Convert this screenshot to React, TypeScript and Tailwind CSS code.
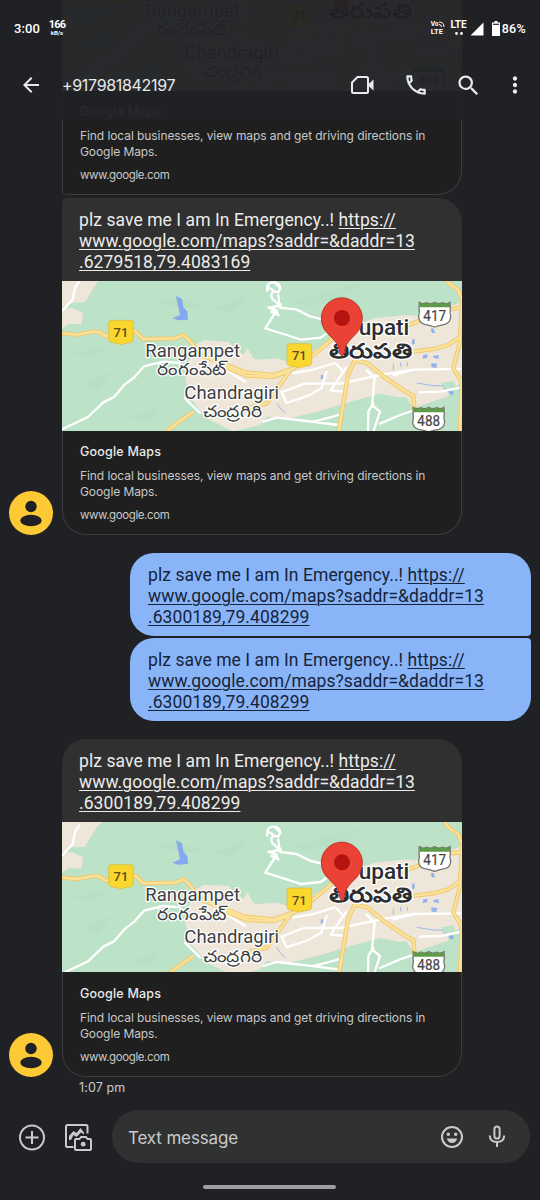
import React from "react";
import { MdArrowBack, MdSearch, MdMoreVert, MdOutlineCall } from "react-icons/md";

const LABEL = "Roboto, 'Noto Sans', sans-serif";

function YellowShield({ x, y }: { x: number; y: number }) {
  return (
    <g transform={`translate(${x} ${y})`}>
      <path
        d="M-30 -36H30Q37 -36 37 -29V21Q37 28 30 30L8 34Q0 40 -8 34L-30 30Q-37 28 -37 21V-29Q-37 -36 -30 -36Z"
        fill="#f9d72f"
        stroke="#d8b83c"
        strokeWidth="2"
      />
      <text x="0" y="14" fontSize="39" fontWeight="500" textAnchor="middle" fill="#5a4e1c" fontFamily={LABEL}>
        71
      </text>
    </g>
  );
}

function WhiteShield({ x, y, label }: { x: number; y: number; label: string }) {
  return (
    <g transform={`translate(${x} ${y})`}>
      <path
        d="M-46 -38Q-34 -30 -24 -37Q-12 -30 0 -38Q12 -30 24 -37Q34 -30 46 -38L47 -18Q44 -8 48 4Q48 24 30 28Q12 31 0 36Q-12 31 -30 28Q-48 24 -48 4Q-44 -8 -47 -18Z"
        fill="#fff"
        stroke="#77776f"
        strokeWidth="4"
      />
      <path d="M-46 -38Q-34 -30 -24 -37Q-12 -30 0 -38Q12 -30 24 -37Q34 -30 46 -38L46 -23H-46Z" fill="#5f9a4a" />
      <text
        x="0"
        y="17"
        fontSize="42"
        textAnchor="middle"
        fill="#444"
        stroke="#444"
        strokeWidth=".5"
        fontFamily={LABEL}
        textLength="68"
        lengthAdjust="spacingAndGlyphs"
      >
        {label}
      </text>
    </g>
  );
}

const yellowRoads = [
  "M0 174L50 179L100 170L120 172L138 184L180 184L225 168L250 192L345 190L372 180L396 205L420 240L495 268L555 292L640 300L700 280L760 240L812 196L870 140",
  "M495 276L560 302L640 306L690 288L620 385L560 400",
  "M400 410L360 438L318 470",
  "M1150 0L1165 24L1195 45L1206 75L1200 200L1180 280L1205 320L1200 470",
  "M1206 98L1160 104L1060 145L1010 162",
  "M1040 232L1120 222L1165 210L1200 186",
  "M836 470L850 385L864 300L884 256L922 264L975 308L1040 352L1060 362L1064 408",
];

const whiteRoads = [
  "M58 18L45 38L38 74L6 108",
  "M8 462L84 426L130 382L162 366L195 328L224 306L252 274L310 260L360 264",
  "M660 98L710 104L750 124L790 134",
  "M622 48Q618 20 645 22Q668 28 655 52Q628 44 636 70Q650 84 662 92L625 98L650 106L616 160L680 180L722 194L782 188L810 168",
  "M640 98L662 88M634 110L656 120M645 24L662 40M622 36L640 46M636 100L652 112M655 60L658 90",
  "M670 350L732 326L840 326L962 300L1060 284L1200 282",
  "M824 264L760 284L700 294",
  "M858 278L812 346L852 350M830 268L850 290M800 290L784 340L745 362L680 384L664 350",
  "M920 286L944 310L936 390L960 410L940 470M940 385L925 410L924 470",
  "M1200 338L1142 350L1080 352M1080 400L1020 420L960 446",
  "M610 440L650 428L740 438L835 450M835 420L785 434L760 440",
  "M375 370L420 414M500 286L556 320M1000 300L1060 284",
];

function MapPreview({ shifted = false }: { shifted?: boolean }) {
  return (
    <svg className="block h-[150px] w-full" viewBox={shifted ? "6 8 1200 450" : "6 18 1200 450"} aria-label="Map">
      <rect x="0" y="0" width="1210" height="480" fill="#bce2c8" />
      <g fill="#aed9bd" opacity=".3">
        <path d="M280 80Q330 60 420 92L380 100Z" />
        <path d="M460 100L560 66L520 110Z" />
        <path d="M700 80L900 25L850 70L740 94Z" />
        <path d="M70 330L150 290L120 340Z" />
        <path d="M210 430L300 395L270 440Z" />
        <path d="M40 235L140 215L90 250Z" />
      </g>
      <g fill="#ede6d9">
        <path d="M0 0H135L110 24L75 82L35 84L6 98Z" />
        <path d="M6 100L35 98L70 114L64 148L28 146L6 160Z" />
        <path d="M400 214L430 196L505 200L550 240L562 218L580 250L590 254L650 250L690 262L740 240L810 196L850 170L940 130L1040 120L1100 126L1180 90L1206 80V320L1170 350L1160 380L1120 392L1060 396L1040 372L960 356L880 378L780 408L690 430L620 426L600 450L520 470L440 430L390 370L376 312Z" />
      </g>
      <g fill="#bce2c8">
        <path d="M1145 324L1180 318L1190 340L1150 342Z" />
        <path d="M862 400L920 376L1040 366L1058 400L1206 350V470H850Z" />
      </g>
      <g fill="#84a9ef">
        <path d="M348 62L366 72L370 96L382 110L384 134L354 136L338 130L360 120Z" />
        <path
          d="M1090 240L1102 238V248L1088 252ZM1120 242L1136 240V252L1120 248ZM1114 264L1132 266L1128 280L1114 276ZM1112 162L1120 160L1126 174H1116ZM1056 194L1064 192V208H1056ZM1164 348L1180 350V360L1168 358ZM783 300H789V312H782Z"
          opacity=".85"
        />
      </g>
      <g fill="none" stroke="#84a9ef" strokeWidth="3" opacity=".75">
        <path d="M1070 324L1120 332H1150M1000 268V286M1022 262V276M1042 262V274M650 384L662 402L676 414M1150 340L1180 350" />
      </g>
      <g fill="none" stroke="#fff" strokeWidth="7" strokeLinejoin="round" strokeLinecap="round">
        {whiteRoads.map((d) => (
          <path key={d} d={d} />
        ))}
      </g>
      <g fill="none" strokeLinejoin="round">
        {yellowRoads.map((d) => (
          <path key={d} d={d} stroke="#f0c96f" strokeWidth="13" />
        ))}
        {yellowRoads.map((d) => (
          <path key={d} d={d} stroke="#fbe29a" strokeWidth="7" />
        ))}
      </g>
      <YellowShield x={183} y={172} />
      <YellowShield x={718} y={242} />
      <g fontFamily={LABEL} fill="#3d3f42" stroke="#fff" strokeWidth="8" strokeLinejoin="round" paintOrder="stroke">
        <text x="256" y="245" fontSize="56" textLength="284" lengthAdjust="spacingAndGlyphs">
          Rangampet
        </text>
        <text x="292" y="301" fontSize="51" textLength="208" lengthAdjust="spacingAndGlyphs">
          రంగంపేట్
        </text>
        <text x="373" y="372" fontSize="56" textLength="284" lengthAdjust="spacingAndGlyphs">
          Chandragiri
        </text>
        <text x="428" y="427" fontSize="49" textLength="180" lengthAdjust="spacingAndGlyphs">
          చంద్రగిరి
        </text>
        <text x="896" y="179" fontSize="66" fontWeight="500" fill="#2c2d30" textLength="152" lengthAdjust="spacingAndGlyphs">
          upati
        </text>
        <text x="808" y="248" fontSize="62" fontWeight="700" fill="#2c2d30" textLength="248" lengthAdjust="spacingAndGlyphs">
          తిరుపతి
        </text>
      </g>
      <WhiteShield x={1124} y={120} label="417" />
      <WhiteShield x={1106} y={435} label="488" />
      <path
        d="M846 242C839 242 839 230 836 219C828 186 784 177 784 130A61.500 61.500 0 0 1 907 130C907 177 864 186 856 219C853 230 853 242 846 242Z"
        fill="#ea4335"
        stroke="#bd3429"
        strokeWidth="3"
      />
      <circle cx="846" cy="129" r="24" fill="#b31412" />
    </svg>
  );
}

function MessageText({ tail }: { tail: string }) {
  return (
    <p className="whitespace-nowrap text-[17.500px] leading-[21px] tracking-[0.07px]">
      plz save me I am In Emergency..!{" "}
      <a className="underline decoration-1 underline-offset-2">
        https://
        <br />
        www.google.com/maps?saddr=&amp;daddr=13
        <br />
        {tail}
      </a>
    </p>
  );
}

function Avatar() {
  return (
    <svg className="ml-[9px] mr-[9px] size-11 shrink-0 self-end" viewBox="0 0 44 44">
      <circle cx="22" cy="22" r="22" fill="#fdc935" />
      <circle cx="22" cy="15.500" r="5.700" fill="#202124" />
      <ellipse cx="22" cy="29.500" rx="10.700" ry="5.700" fill="#202124" />
    </svg>
  );
}

function LinkCard({
  tail,
  shifted,
  bottom = "rounded-b-[24px]",
  top = "rounded-t-[24px]",
  details = "h-[104px] pt-[13px]",
}: {
  tail: string;
  shifted?: boolean;
  bottom?: string;
  top?: string;
  details?: string;
}) {
  return (
    <div className={`w-[400px] overflow-hidden bg-[#303030] ${top} ${bottom}`}>
      <div className="h-[83px] pl-[17px] pt-3 text-[#ececec]">
        <MessageText tail={tail} />
      </div>
      <MapPreview shifted={shifted} />
      <div
        className={`border border-t-0 border-[#3d3d3f] bg-[#1f1f1f] pl-[17px] font-[Inter,sans-serif] ${details} ${bottom}`}
      >
        <h2 className="text-[12.500px] font-medium leading-4 tracking-[0.2px] text-[#e8e8e8]">Google Maps</h2>
        <p className="mt-2 whitespace-nowrap text-[12px] leading-[15.500px] tracking-[-0.08px] text-[#c8c8c8]">
          Find local businesses, view maps and get driving directions in
          <br />
          Google Maps.
        </p>
        <p className="mt-2 text-[11.500px] leading-4 tracking-[-0.4px] text-[#c8c8c8]">www.google.com</p>
      </div>
    </div>
  );
}

function SentBubble({ corner }: { corner: string }) {
  return (
    <div className={`h-[83px] w-[401px] bg-[#8ab4f8] pl-[18px] pt-3 text-[#15243a] ${corner}`}>
      <MessageText tail=".6300189,79.408299" />
    </div>
  );
}

function StatusBar() {
  return (
    <div className="flex h-14 items-center pl-[14px] text-white">
      <span className="pt-px text-[13px] font-medium leading-4 tracking-[0.1px]">3:00</span>
      <span className="ml-[9px] flex w-4 flex-col items-center">
        <span className="text-[11px] font-bold leading-[10px] tracking-[-0.8px]">166</span>
        <span className="text-[6px] font-bold leading-[6px]">kB/s</span>
      </span>
      <span className="ml-auto flex flex-col text-[7.500px] font-bold leading-[8px]">
        <span className="flex items-center text-[6.500px]">
          Vo
          <svg className="size-[6px]" viewBox="0 0 6 6" fill="none" stroke="white" strokeWidth="1">
            <path d="M0 1Q5 1 5 6M0 3.500Q2.500 3.500 2.500 6" />
          </svg>
        </span>
        <span>LTE</span>
      </span>
      <span className="ml-[6px] flex flex-col items-center text-[10px] font-bold leading-[8px]">
        LTE
        <svg className="mt-[3px] h-[3px] w-2" viewBox="0 0 8 3" fill="white">
          <circle cx="1.500" cy="1.500" r="1.400" />
          <circle cx="6.500" cy="1.500" r="1.400" />
        </svg>
      </span>
      <svg className="ml-[3px] mt-px size-[14px]" viewBox="0 0 14 14" fill="white">
        <path d="M13.500 0.500V13.500H0.500Z" />
      </svg>
      <svg className="ml-2 h-[15px] w-2" viewBox="0 0 8 15" fill="white">
        <path d="M2.500 0h3v1.500H8V15H0V1.500h2.500Z" />
        <path d="M1 2.700h6v1.300H1Z" fill="#3b3c40" />
      </svg>
      <span className="ml-[2px] mr-[14px] pt-px text-[12.500px] font-medium leading-4 tracking-[0.3px]">86%</span>
    </div>
  );
}

function Header() {
  return (
    <header className="absolute inset-x-0 top-0 h-[120px] bg-[#202124]/96 text-[#e8eaed]">
      <StatusBar />
      <div className="flex h-[58px] items-center">
        <MdArrowBack className="ml-[19px] size-6" />
        <h1 className="ml-[19px] font-[Inter,sans-serif] text-[16px] leading-6 tracking-[-0.32px]">+917981842197</h1>
        <svg
          className="ml-auto h-5 w-6"
          viewBox="0 0 24 20"
          fill="none"
          stroke="currentColor"
          strokeWidth="2"
          strokeLinejoin="round"
        >
          <path d="M6.500 2H15.500Q17 2 17 3.500V16.500Q17 18 15.500 18H2.500Q1 18 1 16.500V7.500Z" />
          <path d="M17 9.500L22.500 4.500V15.500L17 10.500Z" fill="currentColor" stroke="none" />
        </svg>
        <MdOutlineCall className="ml-[28px] size-[26px]" />
        <MdSearch className="ml-[26px] size-[27px]" />
        <MdMoreVert className="ml-5 mr-3 size-[26px]" />
      </div>
    </header>
  );
}

function Composer() {
  return (
    <footer className="shrink-0 bg-[#202124] pt-[10px]">
      <div className="flex items-center text-[#c9cacc]">
        <svg className="ml-[18px] size-7" viewBox="0 0 28 28" fill="none" stroke="currentColor" strokeWidth="2">
          <circle cx="14" cy="14.500" r="12" />
          <path d="M14 8V21M7.500 14.500H20.500" />
        </svg>
        <svg
          className="ml-[18px] size-7"
          viewBox="0 0 28 28"
          fill="none"
          stroke="currentColor"
          strokeWidth="2"
          strokeLinejoin="round"
        >
          <path d="M9.500 24H3.500Q2 24 2 22.500V3.500Q2 2 3.500 2H22Q23.500 2 23.500 3.500V10.500" />
          <path
            d="M5 17V13L9.500 8L12.500 10L16.500 5L20 9.500V11.500L17 9.500L12.500 14L9.500 12L7 17Z"
            fill="currentColor"
            stroke="none"
          />
          <path d="M12 16H15.500L17 14H22L23.500 16H26Q27 16 27 17V26Q27 27 26 27H12Q11 27 11 26V17Q11 16 12 16Z" />
          <circle cx="19.200" cy="21.200" r="2.400" fill="currentColor" stroke="none" />
        </svg>
        <div className="ml-5 flex h-[53px] w-[418px] items-center rounded-full bg-[#303131]">
          <span className="ml-4 pt-[2px] font-[Inter,sans-serif] text-[17px] leading-6 tracking-[-0.15px]">
            Text message
          </span>
          <svg className="ml-auto size-6" viewBox="0 0 24 24" fill="none" stroke="currentColor" strokeWidth="2">
            <circle cx="12" cy="12" r="10" />
            <circle cx="8.300" cy="9.300" r="1.700" fill="currentColor" stroke="none" />
            <circle cx="15.700" cy="9.300" r="1.700" fill="currentColor" stroke="none" />
            <path d="M6.700 13.500H17.300Q15.600 18 12 18Q8.400 18 6.700 13.500Z" fill="currentColor" stroke="none" />
          </svg>
          <svg
            className="ml-[21px] mr-[21px] size-6"
            viewBox="0 0 24 24"
            fill="none"
            stroke="currentColor"
            strokeWidth="2"
          >
            <rect x="9.400" y="1.500" width="5.200" height="12" rx="2.600" />
            <path d="M4.800 10.500Q5 17 12 17Q19 17 19.200 10.500M12 17V22" />
          </svg>
        </div>
      </div>
      <div className="flex h-[37px] items-end justify-center pb-[11px] pr-[2px]">
        <div className="h-1 w-[133px] rounded-full bg-[#a09ca3]" />
      </div>
    </footer>
  );
}

export default function App() {
  return (
    <div className="relative flex h-[1200px] w-[540px] flex-col overflow-hidden bg-[#202124] font-[Roboto,sans-serif]">
      <main className="flex min-h-0 flex-1 flex-col justify-end">
        <div className="pl-[62px]">
          <LinkCard tail=".6279518,79.4083169" bottom="rounded-bl-[5px] rounded-br-[24px]" />
        </div>
        <div className="mt-[3px] flex">
          <Avatar />
          <LinkCard tail=".6279518,79.4083169" top="rounded-tl-[5px] rounded-tr-[24px]" />
        </div>
        <div className="mt-[18px] flex flex-col items-end gap-[2px] pr-[9px]">
          <SentBubble corner="rounded-[24px] rounded-br-[4px]" />
          <SentBubble corner="rounded-[24px] rounded-tr-[4px]" />
        </div>
        <div className="mt-[18px] flex">
          <Avatar />
          <LinkCard tail=".6300189,79.408299" shifted details="h-[105px] pt-[14px]" />
        </div>
        <time className="mb-1 ml-[79px] h-6 pt-[3px] font-[Inter,sans-serif] text-[12.500px] leading-4 tracking-[0.1px] text-[#c9cacc]">
          1:07 pm
        </time>
      </main>
      <Composer />
      <Header />
    </div>
  );
}
